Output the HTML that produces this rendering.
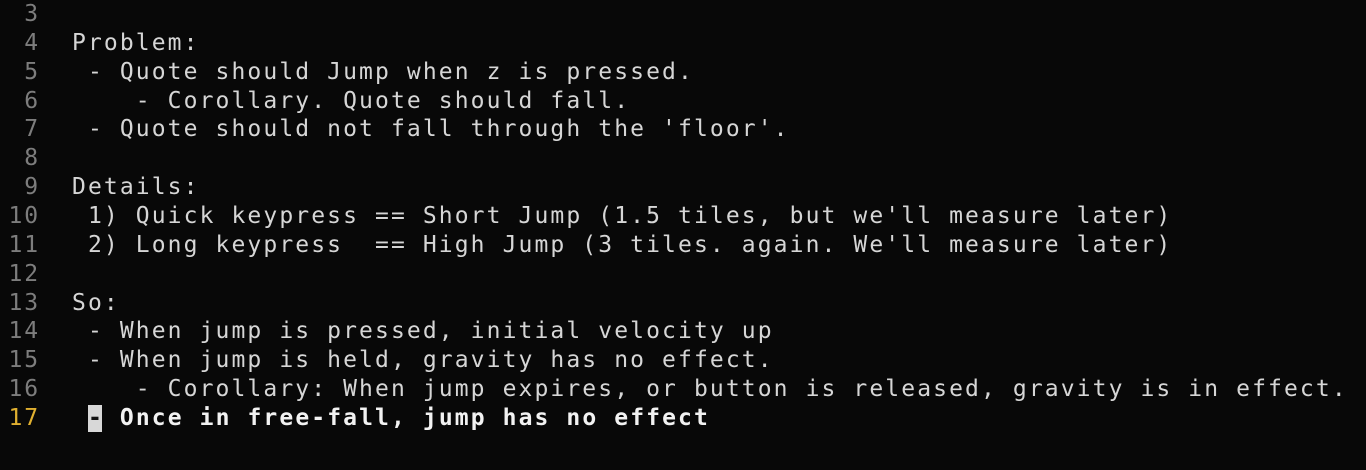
<!DOCTYPE html>
<html><head><style>
html,body{margin:0;padding:0;background:#080808;width:1366px;height:470px;overflow:hidden}
.w{position:absolute;top:0px;left:0;font-family:"DejaVu Sans Mono","Liberation Mono",monospace;font-size:23px;line-height:28.86px;letter-spacing:2.1px;white-space:pre;color:#d6d6d6}
.n{position:absolute;left:0;width:56px;text-align:right;color:#7d7d7d;letter-spacing:2px}
.t{position:absolute;left:72px}
.y{color:#e0b030}
.b{font-weight:bold;color:#f2f2f2}
.c{background:#d8d8d8;color:#111;display:inline-block;width:14px;height:27px;line-height:27px;letter-spacing:0;text-align:center;vertical-align:-6px;margin-right:2px;position:relative;top:-6px}
</style></head><body><div class="w">
<div style="position:absolute;top:0"><span class="n">3 </span></div>
<div style="position:absolute;top:28.86px"><span class="n">4 </span><span class="t">Problem:</span></div>
<div style="position:absolute;top:57.72px"><span class="n">5 </span><span class="t"> - Quote should Jump when z is pressed.</span></div>
<div style="position:absolute;top:86.58px"><span class="n">6 </span><span class="t">    - Corollary. Quote should fall.</span></div>
<div style="position:absolute;top:115.44px"><span class="n">7 </span><span class="t"> - Quote should not fall through the 'floor'.</span></div>
<div style="position:absolute;top:144.3px"><span class="n">8 </span></div>
<div style="position:absolute;top:173.16px"><span class="n">9 </span><span class="t">Details:</span></div>
<div style="position:absolute;top:202.02px"><span class="n">10 </span><span class="t"> 1) Quick keypress == Short Jump (1.5 tiles, but we'll measure later)</span></div>
<div style="position:absolute;top:230.88px"><span class="n">11 </span><span class="t"> 2) Long keypress  == High Jump (3 tiles. again. We'll measure later)</span></div>
<div style="position:absolute;top:259.74px"><span class="n">12 </span></div>
<div style="position:absolute;top:288.6px"><span class="n">13 </span><span class="t">So:</span></div>
<div style="position:absolute;top:317.46px"><span class="n">14 </span><span class="t"> - When jump is pressed, initial velocity up</span></div>
<div style="position:absolute;top:346.32px"><span class="n">15 </span><span class="t"> - When jump is held, gravity has no effect.</span></div>
<div style="position:absolute;top:375.18px"><span class="n">16 </span><span class="t">    - Corollary: When jump expires, or button is released, gravity is in effect.</span></div>
<div style="position:absolute;top:404.04px"><span class="n y">17 </span><span class="t b"> <span class="c">-</span> Once in free-fall, jump has no effect</span></div>
</div></body></html>
